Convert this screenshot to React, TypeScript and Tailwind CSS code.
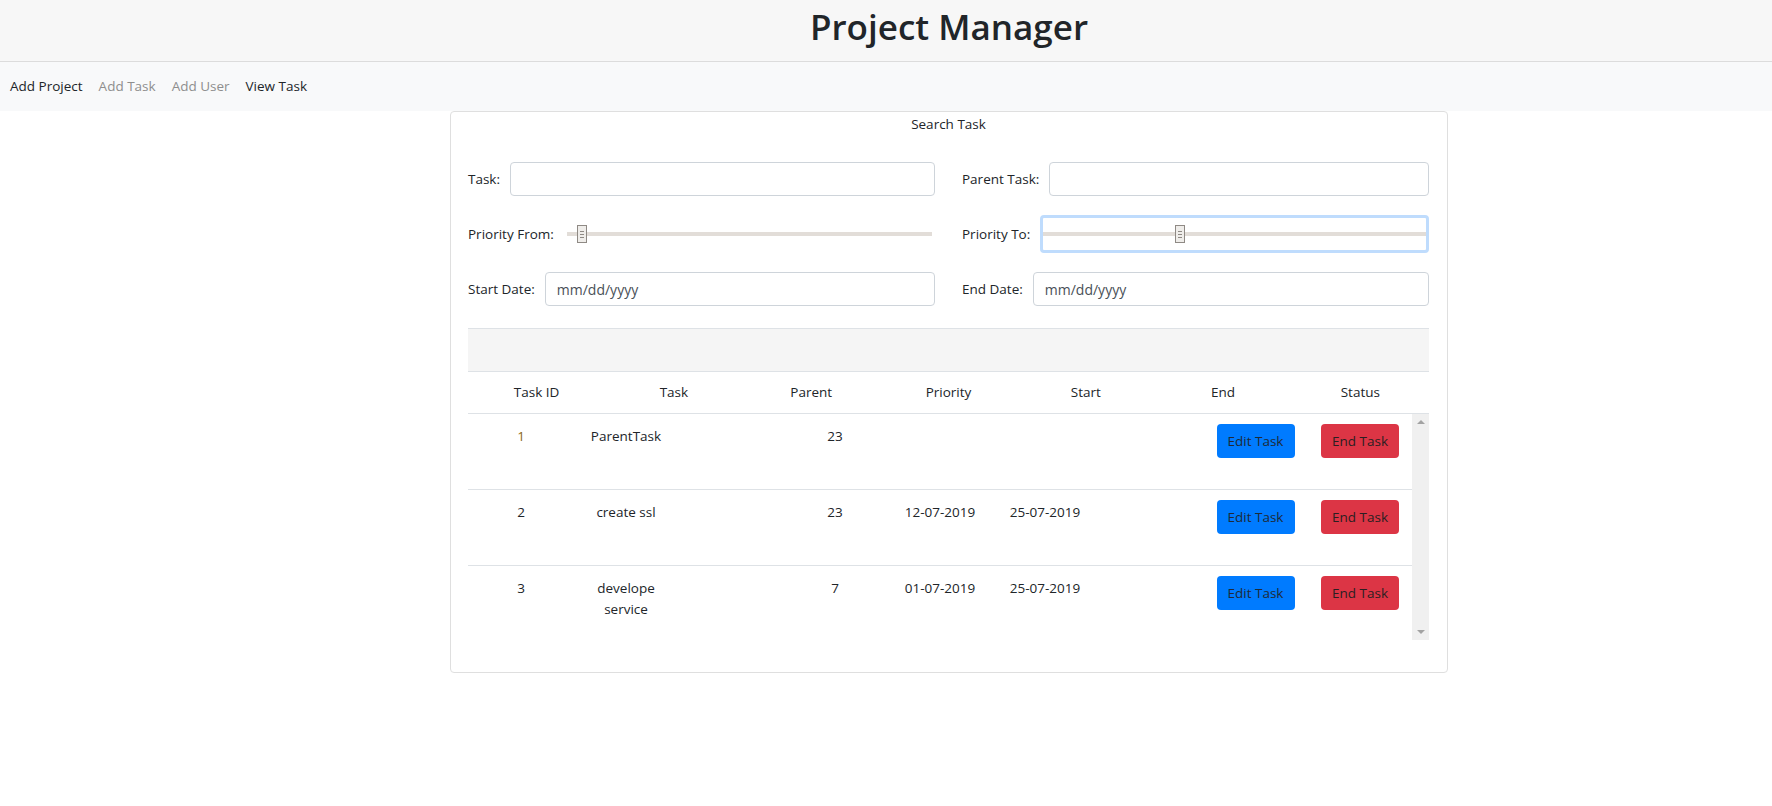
import React from 'react';

type Task = {
  id: string;
  name: string;
  parent: string;
  priority: string;
  start: string;
  idColor?: string;
};

const tasks: Task[] = [
  { id: '1', name: 'ParentTask', parent: '23', priority: '', start: '', idColor: 'text-[#8b6914]' },
  { id: '2', name: 'create ssl', parent: '23', priority: '12-07-2019', start: '25-07-2019' },
  { id: '3', name: 'develope service', parent: '7', priority: '01-07-2019', start: '25-07-2019' },
];

const headers = ['Task ID', 'Task', 'Parent', 'Priority', 'Start', 'End', 'Status'];

const Slider: React.FC<{ offset: number; focused?: boolean }> = ({ offset, focused }) => (
  <div
    className={
      'relative flex-1 h-[38px] flex items-center rounded-[4px] ' +
      (focused ? 'border-[3px] border-[#bfdcfd]' : 'border-[3px] border-transparent')
    }
  >
    <div className="relative w-full h-[4px] bg-[#e2ddd8]">
      <div
        className="absolute top-[-7px] w-[10px] h-[18px] bg-[#efedea] border border-[#8f8a85] flex flex-col items-center justify-center gap-[2px]"
        style={{ left: offset }}
      >
        <span className="block w-[4px] h-px bg-[#8f8a85]" />
        <span className="block w-[4px] h-px bg-[#8f8a85]" />
        <span className="block w-[4px] h-px bg-[#8f8a85]" />
      </div>
    </div>
  </div>
);

const TextField: React.FC<{ placeholder?: string }> = ({ placeholder }) => (
  <input
    type="text"
    placeholder={placeholder}
    className="flex-1 min-w-0 h-[34px] px-[11px] border border-[#ced4da] rounded-[4px] bg-white text-[14px] text-[#495057] placeholder-[#495057] outline-none"
  />
);

const Field: React.FC<{ label: string; children: React.ReactNode }> = ({ label, children }) => (
  <div className="flex items-center h-[38px] gap-[10px]">
    <label className="whitespace-nowrap">{label}</label>
    {children}
  </div>
);

export default function App() {
  return (
    <div className="min-h-screen bg-white text-[14px] text-[#212529] font-['Open_Sans',sans-serif]">
      <header className="h-[62px] bg-[#f7f7f7] border-b border-[#dcdcdc] flex items-center justify-center pl-[126px]">
        <h1 className="text-[35px] font-semibold leading-none pb-[8px] text-[#212529]">Project Manager</h1>
      </header>

      <nav className="h-[49px] bg-[#f8f9fa] flex items-center px-[2px] text-[13.5px]">
        <a className="px-[8px] text-[#212529]">Add Project</a>
        <a className="px-[8px] text-[#8e8e8e]">Add Task</a>
        <a className="px-[8px] text-[#8e8e8e]">Add User</a>
        <a className="px-[8px] text-[#212529]">View Task</a>
      </nav>

      <div className="ml-[450px] w-[998px] h-[562px] border border-[#dfdfdf] rounded-[4px] px-[17px] pr-[18px]">
        <div className="text-center pt-[2px] leading-[21px] text-[13.5px]">Search Task</div>

        <div className="mt-[25px] grid grid-cols-2 gap-x-[27px] gap-y-[17px] text-[13.5px]">
          <Field label="Task:">
            <TextField />
          </Field>
          <Field label="Parent Task:">
            <TextField />
          </Field>
          <Field label="Priority From:">
            <Slider offset={10} />
          </Field>
          <Field label="Priority To:">
            <Slider offset={132} focused />
          </Field>
          <Field label="Start Date:">
            <TextField placeholder="mm/dd/yyyy" />
          </Field>
          <Field label="End Date:">
            <TextField placeholder="mm/dd/yyyy" />
          </Field>
        </div>

        <div className="mt-[20px] h-[44px] bg-[#f5f5f5] border-y border-[#dee2e6]" />

        <div className="grid grid-cols-7 h-[42px] items-center border-b border-[#dee2e6] text-center text-[13.5px]">
          {headers.map((h) => (
            <div key={h}>{h}</div>
          ))}
        </div>

        <div className="flex h-[226px] overflow-hidden text-[13.5px]">
          <div className="w-[944px]">
            {tasks.map((t) => (
              <div
                key={t.id}
                className="grid grid-cols-[106px_104px_112px_90px_120px_90px_113px_105px_104px] h-[76px] border-b border-[#dee2e6] leading-[21px]"
              >
                <div className={'pt-[12px] text-center ' + (t.idColor ?? '')}>{t.id}</div>
                <div className="pt-[12px] px-[10px] text-center">{t.name}</div>
                <div />
                <div className="pt-[12px] text-center">{t.parent}</div>
                <div className="pt-[12px] text-center whitespace-nowrap">{t.priority}</div>
                <div className="pt-[12px] text-center whitespace-nowrap">{t.start}</div>
                <div />
                <div className="pt-[10px] flex justify-center">
                  <button className="w-[78px] h-[34px] rounded-[4px] bg-[#007bff] text-[#1f2a36] text-[13.5px]">
                    Edit Task
                  </button>
                </div>
                <div className="pt-[10px] flex justify-center">
                  <button className="w-[78px] h-[34px] rounded-[4px] bg-[#dc3545] text-[#2b1f22] text-[13.5px]">
                    End Task
                  </button>
                </div>
              </div>
            ))}
          </div>
          <div className="w-[17px] h-full bg-[#f0f0f0] flex flex-col items-center justify-between py-[6px]">
            <span className="block w-0 h-0 border-x-[4px] border-x-transparent border-b-[4px] border-b-[#a3a3a3]" />
            <span className="block w-0 h-0 border-x-[4px] border-x-transparent border-t-[4px] border-t-[#a3a3a3]" />
          </div>
        </div>
      </div>
    </div>
  );
}
